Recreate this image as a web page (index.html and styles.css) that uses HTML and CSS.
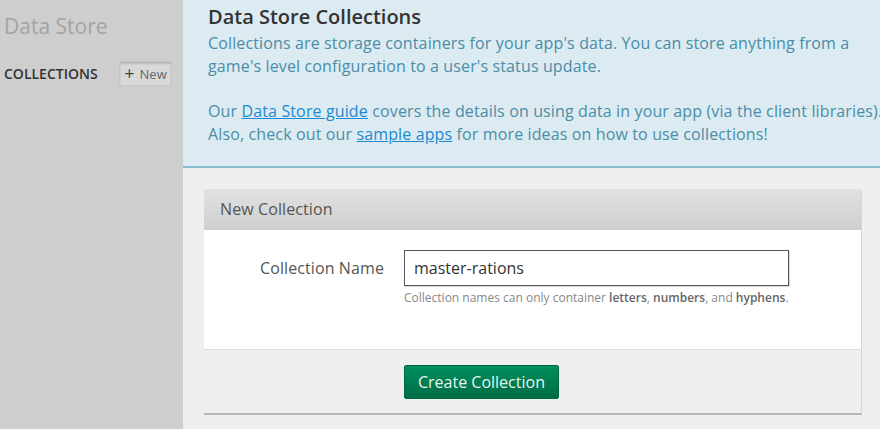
FILE: index.html
```html
<!DOCTYPE html>
<html>
<head>
<meta charset="utf-8">
<link rel="stylesheet" href="styles.css">
</head>
<body>
<div class="app">
  <aside class="sidebar">
    <div class="brand">Data Store</div>
    <div class="side-row">
      <span class="side-title">COLLECTIONS</span>
      <span class="new-btn"><span class="plus">+</span> New</span>
    </div>
  </aside>
  <main class="main">
    <section class="info">
      <h1>Data Store Collections</h1>
      <p>Collections are storage containers for your app's data. You can store anything from a<br>game's level configuration to a user's status update.</p>
      <p>Our <a href="#">Data Store guide</a> covers the details on using data in your app (via the client libraries).<br>Also, check out our <a href="#">sample apps</a> for more ideas on how to use collections!</p>
    </section>
    <section class="panel">
      <div class="panel-head">New Collection</div>
      <div class="panel-body">
        <div class="field">
          <label class="label">Collection Name</label>
          <div class="control">
            <div class="input">master-rations</div>
            <div class="help">Collection names can only container <b>letters</b>, <b>numbers</b>, and <b>hyphens</b>.</div>
          </div>
        </div>
      </div>
      <div class="panel-foot">
        <span class="btn">Create Collection</span>
      </div>
    </section>
  </main>
</div>
</body>
</html>
```
FILE: styles.css
```css
* { box-sizing: border-box; }
html, body { margin: 0; padding: 0; height: 100%; }
body {
  font-family: "Open Sans", "Noto Sans", sans-serif;
  background: #efefef;
  color: #333;
  overflow: hidden;
}
.app { display: flex; height: 429px; }
.sidebar {
  width: 183px;
  flex: none;
  background: #cecece;
  padding: 10px 11px 0 4px;
}
.brand {
  font-size: 21px;
  color: #a3a3a3;
  line-height: 32px;
  margin-bottom: 19px;
}
.side-row {
  display: flex;
  justify-content: space-between;
  align-items: center;
}
.side-title {
  font-size: 14px;
  font-weight: 600;
  color: #333;
}
.new-btn {
  font-size: 13px;
  color: #666;
  background: #d9d9d9;
  border: 1px solid #c6c6c6;
  box-shadow: inset 0 2px 2px rgba(0,0,0,0.15);
  height: 25px;
  width: 53px;
  display: flex;
  align-items: center;
  justify-content: center;
  gap: 5px;
  padding-top: 1px;
}
.plus { font-size: 18px; color: #444; font-weight: 400; line-height: 1; margin-top: -3px; }
.main { flex: 1; min-width: 0; }
.info {
  background: #dceaf1;
  border-bottom: 2px solid #86bccb;
  padding: 4px 0 13px 25px;
  height: 168px;
  overflow: hidden;
}
.info h1 {
  font-size: 20px;
  font-weight: 600;
  color: #333;
  margin: 0 0 2px;
  line-height: 26px;
}
.info p {
  font-size: 16px;
  color: #4a8ea8;
  line-height: 23px;
  margin: 0 0 22px;
  letter-spacing: 0.13px;
  white-space: nowrap;
}
.info a { color: #1b8ad3; text-decoration: underline; }
.panel {
  margin: 21px 18px 0 21px;
  border-right: 1px solid #d5d5d5;
  border-bottom: 2px solid #b8b8b8;
  border-radius: 3px 3px 0 0;
}
.panel-head {
  height: 41px;
  background: linear-gradient(#e2e2e2, #cfcfcf);
  font-size: 16px;
  letter-spacing: 0.1px;
  color: #555;
  padding: 9px 0 0 16px;
  border-radius: 3px 3px 0 0;
}
.panel-body {
  background: #fff;
  height: 120px;
  border-bottom: 1px solid #dedede;
  padding-top: 20px;
}
.field { display: flex; }
.label {
  width: 180px;
  text-align: right;
  font-size: 16px;
  letter-spacing: 0.1px;
  color: #555;
  padding-top: 7px;
}
.control { margin-left: 20px; }
.input {
  width: 385px;
  height: 36px;
  border: 1px solid #555;
  box-shadow: 1px 1px 1px rgba(0,0,0,0.15);
  font-size: 16px;
  color: #333;
  padding: 5px 9px;
  line-height: 24px;
}
.help {
  font-size: 12px;
  color: #888;
  margin-top: 3px;
}
.help b { font-weight: 600; color: #666; }
.panel-foot {
  height: 63px;
  background: #efefef;
  padding: 15px 0 0 200px;
}
.btn {
  display: inline-block;
  background: linear-gradient(#00905e, #006c45);
  color: #e8f4ee;
  font-size: 16px;
  height: 34px;
  line-height: 32px;
  padding: 0 13px;
  border-radius: 2px;
  border: 1px solid #00683f;
}
```
